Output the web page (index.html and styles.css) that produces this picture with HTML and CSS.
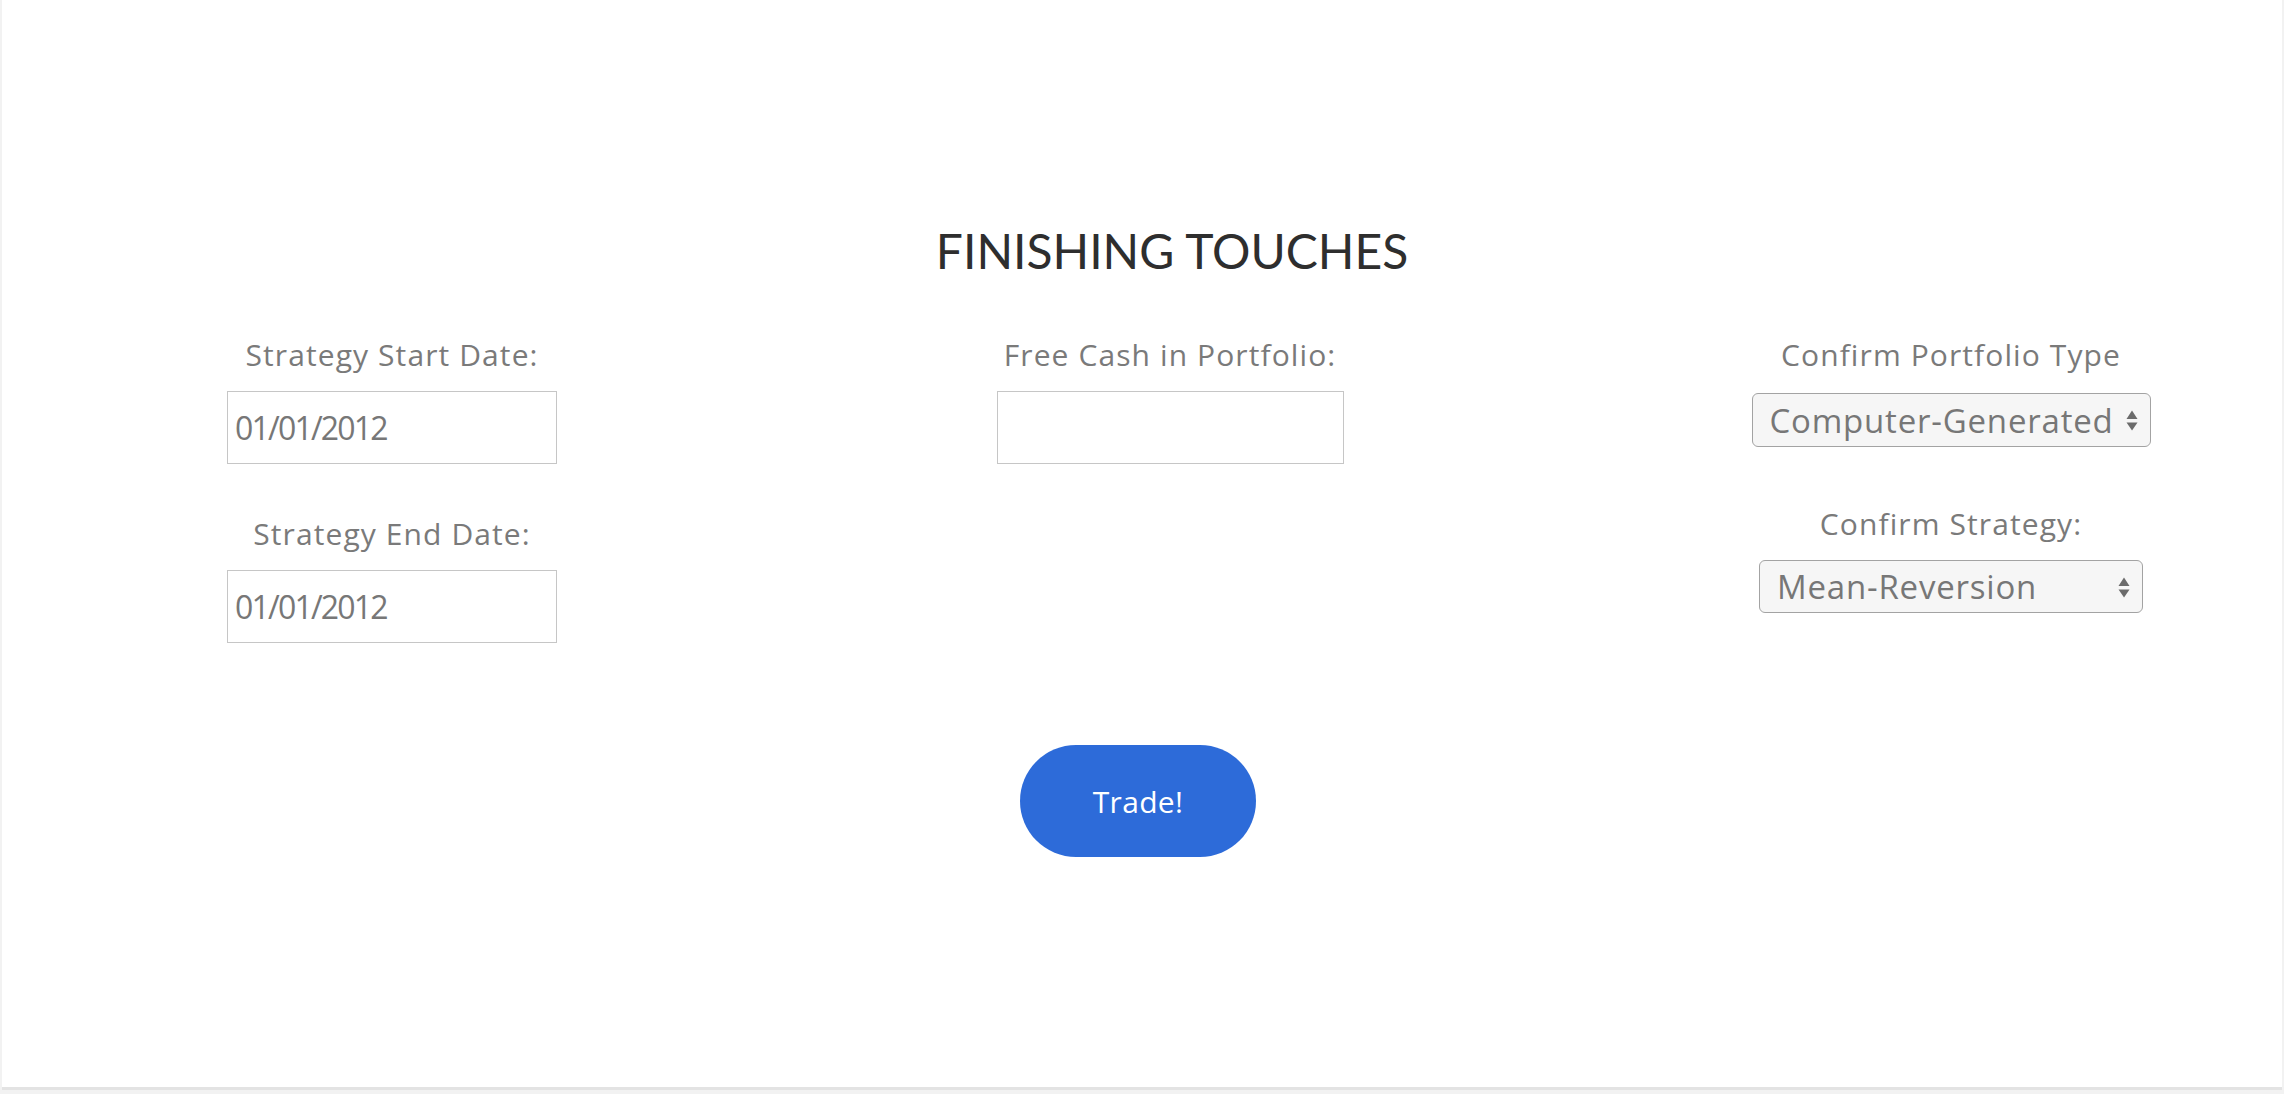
FILE: index.html
```html
<!DOCTYPE html>
<html lang="en">
<head>
<meta charset="utf-8">
<title>Finishing Touches</title>
<link rel="stylesheet" href="styles.css">
</head>
<body>
<main class="panel">
  <h1 class="title">FINISHING TOUCHES</h1>
  <div class="fields">
    <div class="col col-left">
      <label class="label label-start" for="start">Strategy Start Date:</label>
      <input class="text-input date-input" id="start" type="text" value="01/01/2012">
      <label class="label label-end" for="end">Strategy End Date:</label>
      <input class="text-input date-input" id="end" type="text" value="01/01/2012">
    </div>
    <div class="col col-mid">
      <label class="label label-start" for="cash">Free Cash in Portfolio:</label>
      <input class="text-input cash-input" id="cash" type="text" value="">
    </div>
    <div class="col col-right">
      <label class="label label-start" for="ptype">Confirm Portfolio Type</label>
      <div class="select-wrap select-type">
        <select class="select" id="ptype">
          <option>Computer-Generated</option>
          <option>User-Generated</option>
        </select>
        <svg class="select-arrows" width="12" height="21" viewBox="0 0 12 21" aria-hidden="true">
          <path d="M6 0.5 L11.5 9 L0.5 9 Z" fill="#6b6b6b"/>
          <path d="M0.5 12.5 L11.5 12.5 L6 20.5 Z" fill="#6b6b6b"/>
        </svg>
      </div>
      <label class="label label-strategy" for="strategy">Confirm Strategy:</label>
      <div class="select-wrap select-strategy">
        <select class="select" id="strategy">
          <option>Mean-Reversion</option>
          <option>Momentum</option>
        </select>
        <svg class="select-arrows" width="12" height="21" viewBox="0 0 12 21" aria-hidden="true">
          <path d="M6 0.5 L11.5 9 L0.5 9 Z" fill="#6b6b6b"/>
          <path d="M0.5 12.5 L11.5 12.5 L6 20.5 Z" fill="#6b6b6b"/>
        </svg>
      </div>
    </div>
  </div>
  <div class="actions">
    <button class="trade" type="button">Trade!</button>
  </div>
</main>
</body>
</html>
```

FILE: styles.css
```css
html, body {
  margin: 0;
  padding: 0;
}
body {
  background: #f2f2f2;
  font-family: "Open Sans", "Liberation Sans", sans-serif;
}
.panel {
  margin: 0 2px;
  height: 1090px;
  box-sizing: border-box;
  background: #ffffff;
  border-bottom: 3px solid #e3e3e3;
  padding-top: 221px;
}
.title {
  margin: 0;
  padding-left: 60px;
  text-align: center;
  font-family: "Lato", "Noto Sans", sans-serif;
  font-weight: 400;
  font-size: 48px;
  line-height: 60px;
  color: #2e2e2e;
}
.fields {
  display: grid;
  grid-template-columns: 780px 776px 1fr;
  margin-top: 54px;
}
.col {
  display: flex;
  flex-direction: column;
  align-items: center;
}
.col-right {
  padding-left: 62px;
}
.label {
  display: block;
  font-size: 30px;
  line-height: 40px;
  letter-spacing: 1.1px;
  color: #7a7a7a;
  text-align: center;
}
.text-input {
  box-sizing: border-box;
  height: 73px;
  margin-top: 16px;
  padding: 0 7px;
  border: 1px solid #c6c6c6;
  border-radius: 0;
  background: #fff;
  font-family: "Open Sans", "Liberation Sans", sans-serif;
  font-size: 32px;
  letter-spacing: -1.8px;
  color: #777;
  outline: none;
}
.date-input {
  width: 330px;
}
.cash-input {
  width: 347px;
}
.label-end {
  margin-top: 50px;
}
.select-wrap {
  position: relative;
  margin-top: 18px;
}
.select-type {
  width: 399px;
}
.select-strategy {
  width: 384px;
  margin-top: 16px;
}
.label-strategy {
  margin-top: 57px;
}
.select {
  -webkit-appearance: none;
  appearance: none;
  box-sizing: border-box;
  width: 100%;
  height: 54px;
  padding: 0 30px 0 17px;
  border: 1px solid #a3a3a3;
  border-radius: 6px;
  background: #f6f6f6;
  font-family: "Open Sans", "Liberation Sans", sans-serif;
  font-size: 33px;
  letter-spacing: 0.8px;
  color: #777;
  outline: none;
}
.select-strategy .select {
  height: 53px;
}
.select-arrows {
  position: absolute;
  right: 13px;
  top: 50%;
  margin-top: -10px;
  pointer-events: none;
}
.actions {
  display: flex;
  justify-content: center;
  margin-top: 102px;
}
.trade {
  width: 236px;
  height: 112px;
  margin-right: 8px;
  border: none;
  border-radius: 56px;
  background: #2d6bd9;
  color: #fff;
  font-family: "Open Sans", "Liberation Sans", sans-serif;
  font-size: 30px;
  font-weight: 500;
  letter-spacing: 0.3px;
  cursor: pointer;
}
```
